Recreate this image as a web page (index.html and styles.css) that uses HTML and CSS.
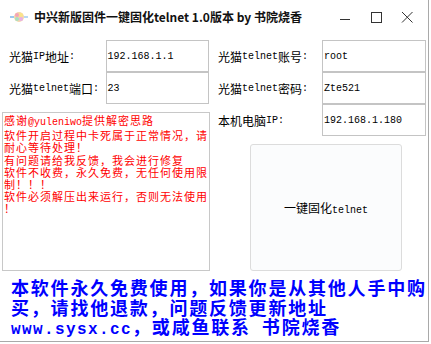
FILE: index.html
```html
<!DOCTYPE html>
<html lang="zh-CN">
<head>
    <meta charset="UTF-8">
    <title>中兴新版固件一键固化telnet</title>
    <link rel="stylesheet" href="styles.css">
</head>
<body>
    <div class="window">
        <!-- 标题栏 -->
        <div class="titlebar">
            <svg class="app-icon" width="18" height="12" viewBox="0 0 18 12">
                <circle cx="9" cy="6" r="5" fill="#f6d5a8"/>
                <circle cx="7" cy="4" r="2" fill="#f4a3b8"/>
                <circle cx="11" cy="4" r="2" fill="#f9e48a"/>
                <circle cx="7" cy="8" r="2" fill="#a8e0c0"/>
                <circle cx="11" cy="8" r="2" fill="#e8b0e6"/>
                <rect x="0" y="5" width="4" height="2" fill="#9cc8f0"/>
                <rect x="14" y="5" width="4" height="2" fill="#b8d8f4"/>
            </svg>
            <span class="title">中兴新版固件一键固化telnet 1.0版本 by 书院烧香</span>
            <div class="controls">
                <span class="ctl">
                    <svg width="12" height="12" viewBox="0 0 12 12"><path d="M1 8.5H11" stroke="#333" stroke-width="1"/></svg>
                </span>
                <span class="ctl">
                    <svg width="12" height="12" viewBox="0 0 12 12"><rect x="1.5" y="1.5" width="10" height="10" fill="none" stroke="#333" stroke-width="1"/></svg>
                </span>
                <span class="ctl">
                    <svg width="12" height="12" viewBox="0 0 12 12"><path d="M1 1L11.5 11.5M11.5 1L1 11.5" stroke="#333" stroke-width="1"/></svg>
                </span>
            </div>
        </div>

        <div class="content">
            <div class="grid">
                <div class="col">
                    <div class="field">
                        <span class="label">光猫<span class="en">IP</span>地址<span class="en">:</span></span>
                        <div class="input"><span class="en">192.168.1.1</span></div>
                    </div>
                    <div class="field">
                        <span class="label">光猫<span class="en">telnet</span>端口<span class="en">:</span></span>
                        <div class="input"><span class="en">23</span></div>
                    </div>
                    <div class="log">感谢<span class="en">@yuleniwo</span>提供解密思路<br>软件开启过程中卡死属于正常情况，请耐心等待处理！<br>有问题请给我反馈，我会进行修复<br>软件不收费，永久免费，无任何使用限制！！！<br>软件必须解压出来运行，否则无法使用！</div>
                </div>
                <div class="col right">
                    <div class="field">
                        <span class="label">光猫<span class="en">telnet</span>账号<span class="en">:</span></span>
                        <div class="input"><span class="en">root</span></div>
                    </div>
                    <div class="field">
                        <span class="label">光猫<span class="en">telnet</span>密码<span class="en">:</span></span>
                        <div class="input"><span class="en">Zte521</span></div>
                    </div>
                    <div class="field">
                        <span class="label">本机电脑<span class="en">IP:</span></span>
                        <div class="input"><span class="en">192.168.1.180</span></div>
                    </div>
                    <button class="btn">一键固化<span class="en">telnet</span></button>
                </div>
            </div>

            <div class="notice">本软件永久免费使用，如果你是从其他人手中购<br>买，请找他退款，问题反馈更新地址<br><span class="en">www.sysx.cc</span>，或咸鱼联系<span class="en"> </span>书院烧香</div>
        </div>
    </div>
</body>
</html>
```

FILE: styles.css
```css
body {
    margin: 0;
    background: #fff;
    font-family: "Noto Sans CJK SC", sans-serif;
    font-size: 12px;
    color: #000;
}
.window {
    width: 428px;
    height: 341px;
    border-right: 1px solid #a9a9a9;
    border-bottom: 1px solid #a9a9a9;
    background: #fff;
    overflow: hidden;
}
.titlebar {
    height: 31px;
    display: flex;
    align-items: center;
    padding: 2px 6px 0 10px;
    box-sizing: border-box;
}
.app-icon {
    margin-right: 6px;
}
.title {
    font-weight: bold;
    font-size: 12px;
    color: #111;
}
.controls {
    margin-left: auto;
    display: flex;
}
.ctl {
    width: 31px;
    display: flex;
    justify-content: center;
    align-items: center;
}
.content {
    padding-top: 9px;
}
.grid {
    display: grid;
    grid-template-columns: 209px 219px;
}
.en {
    font-family: "Liberation Mono", monospace;
    font-size: 10px;
    letter-spacing: 0;
}
.field {
    display: flex;
    height: 32px;
}
.label {
    width: 97px;
    padding-left: 9px;
    display: flex;
    align-items: center;
    white-space: nowrap;
}
.right .label {
    width: 104px;
}
.input {
    width: 104px;
    height: 32px;
    box-sizing: border-box;
    border: 1px solid #c4c4c4;
    padding-left: 1px;
    display: flex;
    align-items: center;
}
.log {
    margin: 8px 0 0 2px;
    width: 208px;
    height: 159px;
    box-sizing: border-box;
    border: 1px solid #c8c8c8;
    padding: 1px 0 0 1px;
    color: #ff0000;
    font-size: 11px;
    letter-spacing: 1px;
    line-height: 12.2px;
    line-break: anywhere;
}
.btn {
    display: block;
    margin: 8px 0 0 41px;
    width: 152px;
    height: 127px;
    background: #fbfcfd;
    border: 1px solid #dcdcdc;
    border-radius: 3px;
    font-family: "Noto Sans CJK SC", sans-serif;
    font-size: 12px;
    color: #000;
    padding: 0;
}
.notice {
    margin-top: 7px;
    padding-left: 11px;
    color: #0000ff;
    font-weight: bold;
    font-size: 18px;
    letter-spacing: 1.8px;
    line-height: 19.5px;
    white-space: nowrap;
}
.notice .en {
    font-size: 16px;
    font-weight: bold;
    letter-spacing: 1.4px;
}
```
